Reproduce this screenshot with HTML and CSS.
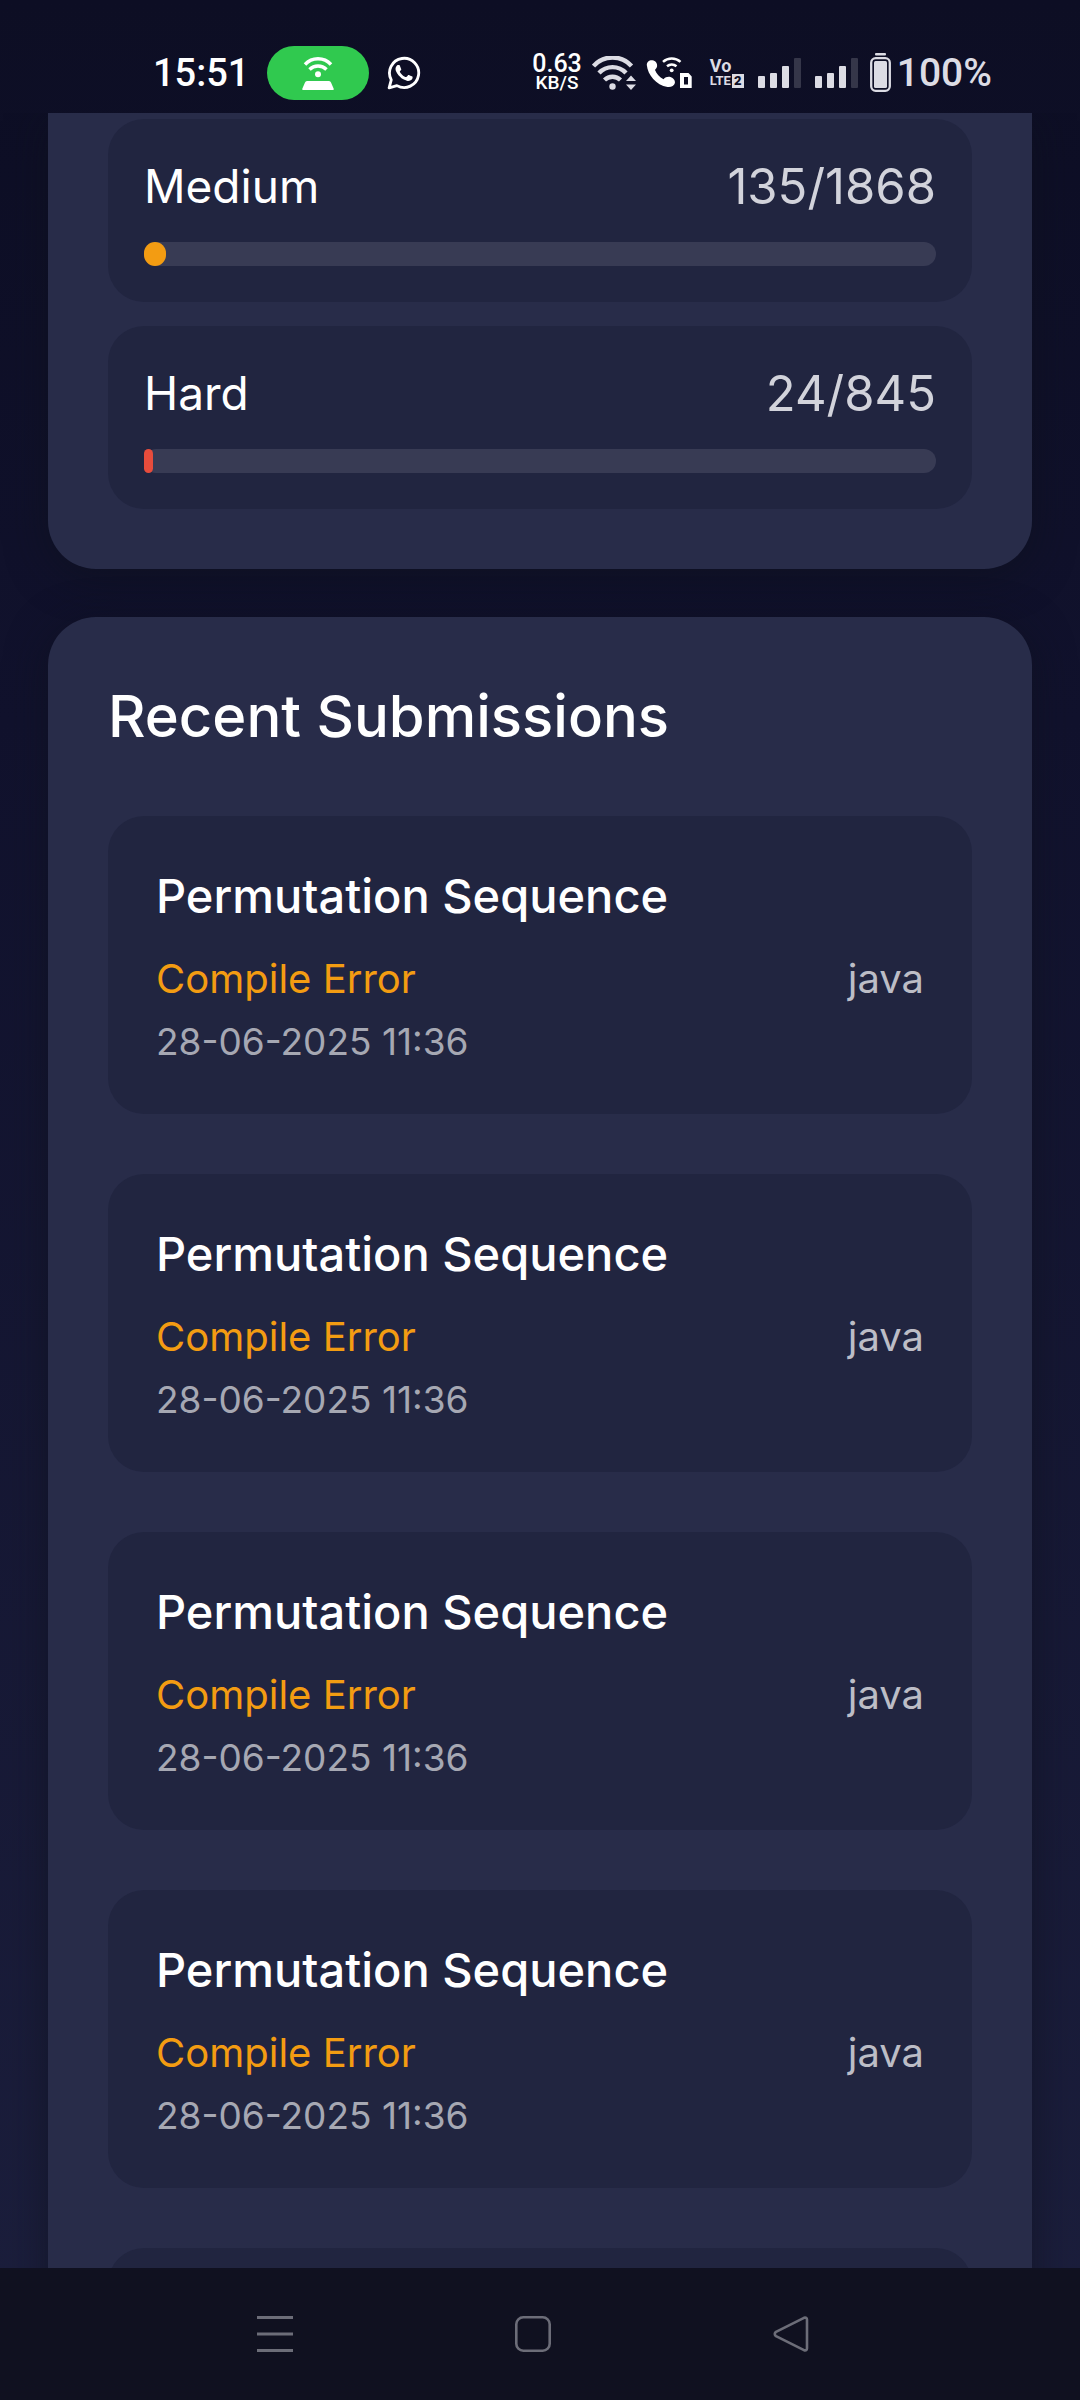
FILE: index.html
```html
<!DOCTYPE html>
<html lang="en">
<head>
<meta charset="utf-8">
<meta name="viewport" content="width=device-width, initial-scale=1">
<title>Recent Submissions</title>
<link rel="stylesheet" href="styles.css">
</head>
<body>
<div class="app">
  <header class="status">
    <div class="status-left">
      <time class="clock">15:51</time>
      <span class="hotspot">
        <svg width="32" height="34" viewBox="0 0 32 34" fill="none" stroke="#fff" stroke-width="3.4" aria-hidden="true">
          <path d="M3 8.5A17.5 17.5 0 0 1 29 8.5M7.5 13.5A12 12 0 0 1 24.5 13.5"/>
          <circle cx="16" cy="18.3" r="3" fill="#fff" stroke="none"/>
          <path d="M5 25h22q1.500 0 2 1.500l2.600 6q.5 1.500-1 1.500H1.400q-1.500 0-1-1.500l2.600-6Q3.500 25 5 25z" fill="#fff" stroke="none"/>
        </svg>
      </span>
      <svg width="34" height="34" viewBox="0 0 24 24" fill="#fff" aria-hidden="true">
        <path d="M17.472 14.382c-.297-.149-1.758-.867-2.030-.967-.273-.099-.471-.148-.67.15-.197.297-.767.966-.94 1.164-.173.199-.347.223-.644.075-.297-.15-1.255-.463-2.390-1.475-.883-.788-1.480-1.761-1.653-2.059-.173-.297-.018-.458.13-.606.134-.133.298-.347.446-.52.149-.174.198-.298.298-.497.099-.198.05-.371-.025-.52-.075-.149-.669-1.612-.916-2.207-.242-.579-.487-.5-.669-.51-.173-.008-.371-.01-.57-.01-.198 0-.52.074-.792.372-.272.297-1.040 1.016-1.040 2.479 0 1.462 1.065 2.875 1.213 3.074.149.198 2.096 3.200 5.077 4.487.709.306 1.262.489 1.694.625.712.227 1.360.195 1.871.118.571-.085 1.758-.719 2.006-1.413.248-.694.248-1.289.173-1.413-.074-.124-.272-.198-.57-.347z"/>
        <path d="M1.500 22.500l1.500-5.700A10.300 10.300 0 1 1 7 20.900z" fill="none" stroke="#fff" stroke-width="2" stroke-linejoin="round"/>
      </svg>
    </div>
    <div class="status-right">
      <div class="group group-data">
        <span class="speed"><b>0.63</b><span>KB/S</span></span>
        <svg width="44" height="34" viewBox="0 0 44 34" fill="none" stroke="#dcdce4" stroke-width="4.400" aria-hidden="true">
          <path d="M1.500 10A25.500 25.500 0 0 1 39.500 10M7 17A18.500 18.500 0 0 1 34 17M12.500 24A11.500 11.500 0 0 1 28.500 24"/>
          <circle cx="20.500" cy="30.500" r="3.200" fill="#dcdce4" stroke="none"/>
          <path d="M34 25l5-5.500 5 5.500zM34 28.500h10l-5 5.500z" fill="#dcdce4" stroke="none"/>
        </svg>
        <svg width="46" height="32" viewBox="0 0 46 32" fill="#fff" aria-hidden="true">
          <path d="M.8 8C.8 4.500 3.500 2.800 6.500 3.200c3 .5 5 3 4.600 6-.3 2-1.600 2.800-2.100 3.800 1.500 4 4.500 7 8.500 9.200 2-2 4-2.700 7-2.200 3 1 4.900 3.500 4.400 6-.8 3-3.900 4.500-7.400 4C10 28 1.800 18 .8 8z"/>
          <path d="M17 4.800A13 13 0 0 1 34.500 4.800M21 9.300A7.500 7.500 0 0 1 30.500 9.300" fill="none" stroke="#fff" stroke-width="2.500"/>
          <circle cx="25.700" cy="13.300" r="1.900"/>
          <path fill-rule="evenodd" d="M34 16h8.500l3.200 3.500V31H34zM38 20v7.500h4V20z"/>
        </svg>
      </div>
      <div class="group group-cell">
        <span class="volte"><span class="volte-top">Vo</span><span class="volte-row">LTE<b class="sim">2</b></span></span>
        <svg width="43" height="30" viewBox="0 0 43 30" fill="#dcdce4" aria-hidden="true">
          <rect y="18" width="7" height="12" rx="1"/><rect x="12" y="15" width="7" height="15" rx="1"/><rect x="24" y="8" width="7" height="22" rx="1"/><rect x="36" width="7" height="30" rx="1" fill="#353649"/>
        </svg>
        <svg width="43" height="30" viewBox="0 0 43 30" fill="#dcdce4" aria-hidden="true">
          <rect y="18" width="7" height="12" rx="1"/><rect x="12" y="15" width="7" height="15" rx="1"/><rect x="24" y="8" width="7" height="22" rx="1"/><rect x="36" width="7" height="30" rx="1" fill="#353649"/>
        </svg>
      </div>
      <div class="group group-battery">
        <svg width="21" height="39" viewBox="0 0 21 39" fill="#dcdce4" aria-hidden="true">
          <rect x="5" width="11" height="2.400" rx="1"/>
          <rect x="1.200" y="5.200" width="18.600" height="32.600" rx="4.500" fill="none" stroke="#dcdce4" stroke-width="2.300"/>
          <rect x="4" y="8" width="13" height="27" rx="1.500"/>
        </svg>
        <span class="percent">100%</span>
      </div>
    </div>
  </header>

  <main class="content">
    <section class="card card-stats" aria-label="Solved by difficulty">
      <div class="stat">
        <div class="stat-row"><span>Medium</span><span class="count">135/1868</span></div>
        <div class="track" role="progressbar" aria-label="Medium" aria-valuemin="0" aria-valuemax="1868" aria-valuenow="135"><div class="fill fill-medium" style="width:2.800%"></div></div>
      </div>
      <div class="stat">
        <div class="stat-row"><span>Hard</span><span class="count">24/845</span></div>
        <div class="track" role="progressbar" aria-label="Hard" aria-valuemin="0" aria-valuemax="845" aria-valuenow="24"><div class="fill fill-hard" style="width:1.150%"></div></div>
      </div>
    </section>

    <section class="card card-recent">
      <h2 class="heading">Recent Submissions</h2>
      <div class="list">
        <article class="submission">
          <h3 class="problem">Permutation Sequence</h3>
          <div class="result"><span class="verdict">Compile Error</span><span class="lang">java</span></div>
          <time class="date">28-06-2025 11:36</time>
        </article>
        <article class="submission">
          <h3 class="problem">Permutation Sequence</h3>
          <div class="result"><span class="verdict">Compile Error</span><span class="lang">java</span></div>
          <time class="date">28-06-2025 11:36</time>
        </article>
        <article class="submission">
          <h3 class="problem">Permutation Sequence</h3>
          <div class="result"><span class="verdict">Compile Error</span><span class="lang">java</span></div>
          <time class="date">28-06-2025 11:36</time>
        </article>
        <article class="submission">
          <h3 class="problem">Permutation Sequence</h3>
          <div class="result"><span class="verdict">Compile Error</span><span class="lang">java</span></div>
          <time class="date">28-06-2025 11:36</time>
        </article>
        <article class="submission"></article>
      </div>
    </section>
  </main>

  <nav class="navbar" aria-label="System navigation">
    <button class="nav-button" type="button" aria-label="Recent apps">
      <svg width="36" height="36" viewBox="0 0 36 36" fill="none" stroke="currentColor" stroke-width="3"><path d="M0 1.500h36M0 18h36M0 34.500h36"/></svg>
    </button>
    <button class="nav-button" type="button" aria-label="Home">
      <svg width="36" height="36" viewBox="0 0 36 36" fill="none" stroke="currentColor" stroke-width="2.600"><rect x="1.300" y="1.300" width="33.400" height="33.400" rx="7"/></svg>
    </button>
    <button class="nav-button" type="button" aria-label="Back">
      <svg width="36" height="36" viewBox="0 0 36 36" fill="none" stroke="currentColor" stroke-width="2.600" stroke-linejoin="round"><path d="M31 1.800L3 15.800q-2.500 2.200 0 4.400L31 34.200q3 .8 3-2V3.800q0-2.800-3-2z"/></svg>
    </button>
  </nav>
</div>
</body>
</html>
```
FILE: styles.css
```css
* {
  box-sizing: border-box;
}

body {
  margin: 0;
  color: #fff;
  font-family: Inter, "Liberation Sans", sans-serif;
}

.app {
  display: flex;
  flex-direction: column;
  height: 100vh;
  background: linear-gradient(#0d0e24, #11122d 30%, #1c1f3d);
}

/* Status bar */
.status {
  display: flex;
  flex: none;
  align-items: center;
  justify-content: space-between;
  height: 113px;
  padding: 32px 88px 0 153px;
  font-family: Roboto, sans-serif;
}

.status-left {
  display: flex;
  align-items: center;
  gap: 18px;
}

.clock {
  font-size: 38px;
  font-weight: 500;
}

.hotspot {
  display: flex;
  align-items: center;
  justify-content: center;
  width: 102px;
  height: 54px;
  border-radius: 27px;
  background: #30c94f;
}

.status-right,
.group {
  display: flex;
  align-items: center;
}

.group-data {
  gap: 10px;
  margin-right: 18px;
}

.group-cell {
  gap: 14px;
  margin-right: 12px;
}

.group-battery {
  gap: 6px;
}

.speed {
  display: flex;
  flex-direction: column;
  align-items: center;
  font-size: 19px;
  font-weight: 500;
  line-height: 18px;
}

.speed b {
  font-size: 25px;
  font-weight: 500;
  line-height: 21px;
}

.volte {
  display: flex;
  flex-direction: column;
  color: #dcdce4;
  font-size: 13px;
  font-weight: 700;
  line-height: 14px;
}

.volte-top {
  font-size: 18px;
  line-height: 16px;
}

.volte-row {
  display: flex;
  gap: 1px;
}

.sim {
  width: 12px;
  background: #dcdce4;
  color: #0d0e24;
  text-align: center;
}

.percent {
  color: #dcdce4;
  font-size: 39px;
  font-weight: 500;
}

/* Scrolling area */
.content {
  display: flex;
  flex: 1;
  flex-direction: column;
  gap: 48px;
  min-height: 0;
  padding: 0 48px;
  overflow: hidden;
}

.card {
  flex: none;
  border-radius: 48px;
  background: #282c49;
  box-shadow: 0 8px 40px rgba(14, 16, 28, 0.6);
}

.card-stats {
  display: flex;
  flex-direction: column;
  gap: 24px;
  padding: 6px 60px 60px;
  border-radius: 0 0 48px 48px;
}

.stat {
  padding: 36px;
  border-radius: 36px;
  background: #212540;
}

.stat-row {
  display: flex;
  justify-content: space-between;
  margin-bottom: 24px;
  font-size: 46px;
  line-height: 63px;
}

.count {
  color: #d2d3db;
  font-size: 49px;
}

.track {
  height: 24px;
  border-radius: 12px;
  background: #383b54;
}

.fill {
  height: 100%;
  border-radius: 12px;
}

.fill-medium {
  background: #f39c12;
}

.fill-hard {
  background: #e74c3c;
}

.card-recent {
  padding: 60px;
}

.heading {
  margin: 0 0 60px;
  font-size: 58px;
  font-weight: 500;
  line-height: 79px;
}

.list {
  display: flex;
  flex-direction: column;
  gap: 60px;
}

.submission {
  min-height: 298px;
  padding: 48px;
  border-radius: 36px;
  background: #212540;
}

.problem {
  margin: 0 0 24px;
  font-size: 47px;
  font-weight: 500;
  line-height: 63px;
}

.result {
  display: flex;
  justify-content: space-between;
  margin-bottom: 12px;
  font-size: 40px;
  line-height: 55px;
}

.verdict {
  color: #f39c12;
}

.lang {
  color: #bcbdc6;
}

.date {
  display: block;
  color: #a6a8b3;
  font-size: 37px;
  line-height: 48px;
}

/* System navigation */
.navbar {
  display: grid;
  flex: none;
  grid-template-columns: repeat(3, 1fr);
  height: 132px;
  padding: 0 160px 0 146px;
  background: #101120;
}

.nav-button {
  display: flex;
  align-items: center;
  justify-content: center;
  padding: 0;
  border: 0;
  background: none;
  color: #6c6d78;
}
```
